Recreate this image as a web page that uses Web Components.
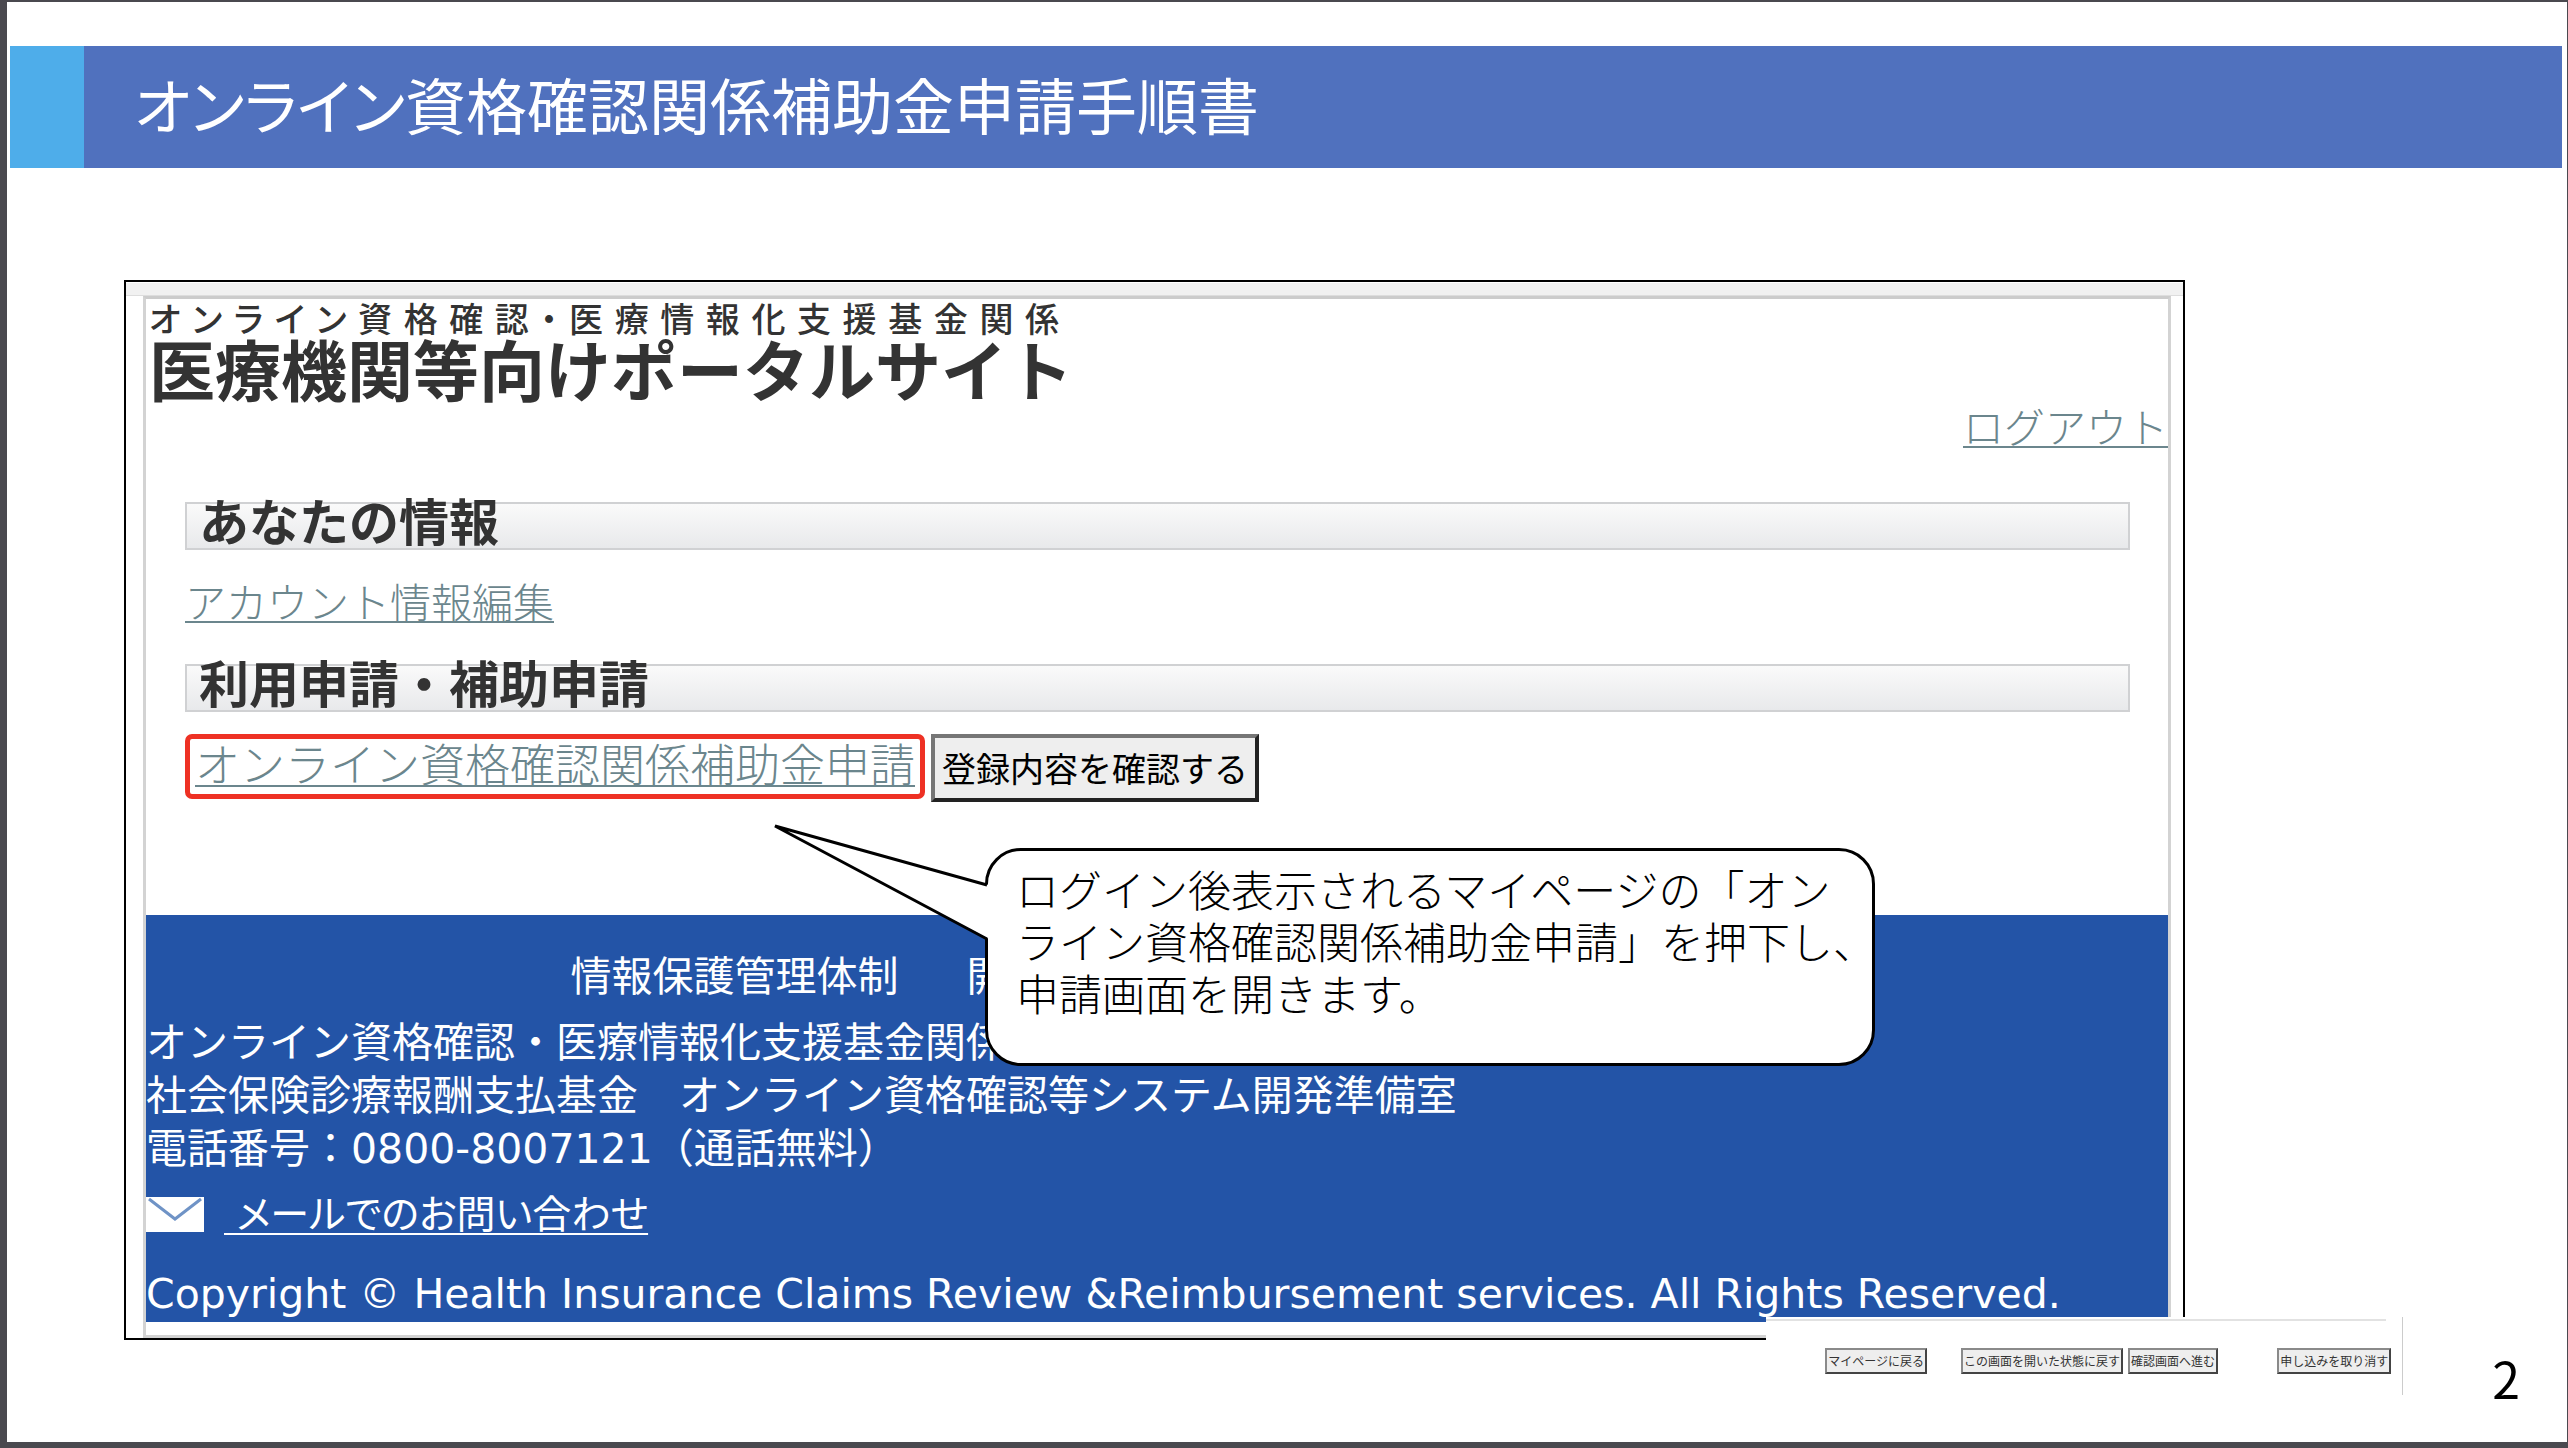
<!DOCTYPE html>
<html lang="ja">
<head>
<meta charset="utf-8">
<title>オンライン資格確認関係補助金申請手順書</title>
<style>
  html { background: #4a494f; }
  body {
    margin: 0;
    padding: 2px 1px 6px 7px;
    box-sizing: border-box;
    min-height: 100vh;
    display: flex;
    font-family: "Noto Sans CJK JP", "Noto Sans", sans-serif;
    color: #333;
  }
</style>
</head>
<body>
<manual-slide>
  <slide-title slot="title">オンライン資格確認関係補助金申請手順書</slide-title>
  <portal-window>
    <portal-logo slot="brand"><span slot="lead">オンライン資格確認・医療情報化支援基金関係</span>医療機関等向けポータルサイト</portal-logo>
    <portal-link slot="account" href="#logout">ログアウト</portal-link>
    <portal-section heading="あなたの情報">
      <portal-link href="#account">アカウント情報編集</portal-link>
    </portal-section>
    <portal-section heading="利用申請・補助申請" compact>
      <portal-link href="#apply" marked>オンライン資格確認関係補助金申請</portal-link>
      <portal-button>登録内容を確認する</portal-button>
    </portal-section>
    <portal-footer slot="footer"></portal-footer>
    <callout-note slot="note">ログイン後表示されるマイページの「オン<br>ライン資格確認関係補助金申請」を押下し、<br>申請画面を開きます。</callout-note>
  </portal-window>
  <form-actions slot="actions"></form-actions>
  <page-number slot="number">2</page-number>
</manual-slide>

<script>
const define = (name, html) => {
  const template = document.createElement("template");
  template.innerHTML = html;
  customElements.define(name, class extends HTMLElement {
    constructor() {
      super();
      this.attachShadow({ mode: "open" }).append(template.content.cloneNode(true));
    }
    connectedCallback() {
      const link = this.shadowRoot.querySelector("a[data-main]");
      if (link) link.href = this.getAttribute("href");
      const heading = this.shadowRoot.querySelector("[data-heading]");
      if (heading) heading.textContent = this.getAttribute("heading");
    }
  });
};

define("manual-slide", `
  <style>
    :host { flex: 1; display: flex; flex-direction: column; background: #fff; min-width: 0; }
    header { margin: 44px 5px 0 3px; }
    main { margin: 112px 382px 0 117px; }
    footer { display: flex; justify-content: flex-end; gap: 89px; margin-top: -23px; padding-right: 47px; position: relative; }
  </style>
  <header><slot name="title"></slot></header>
  <main><slot></slot></main>
  <footer><slot name="actions"></slot><slot name="number"></slot></footer>
`);

define("slide-title", `
  <style>
    :host { display: block; background: #5071be; border-left: 74px solid #4eadea; }
    h1 {
      margin: 0; padding: 0 50px 6px; font-size: 61px; font-weight: 400; line-height: 116px;
      color: #fff; font-feature-settings: "palt"; white-space: nowrap;
    }
  </style>
  <h1><slot></slot></h1>
`);

define("portal-window", `
  <style>
    :host { display: block; position: relative; border: 2px solid #000; background: #fff; }
    .strip { height: 12px; background: #f1f1f1; border-top: 1px solid #fff; border-bottom: 1px solid #ddd; }
    .page { margin: 0 12px 0 17px; border: 3px solid #d3d3d3; border-top-color: #ccc; padding-bottom: 13px; }
    .account { display: flex; justify-content: flex-end; }
    .sections { display: flex; flex-direction: column; gap: 36px; padding: 49px 38px 113px 39px; }
  </style>
  <div class="strip"></div>
  <div class="page">
    <slot name="brand"></slot>
    <div class="account"><slot name="account"></slot></div>
    <div class="sections"><slot></slot></div>
    <slot name="footer"></slot>
    <slot name="note"></slot>
  </div>
`);

define("portal-logo", `
  <style>
    :host {
      display: block; width: fit-content; padding: 0 0 8px 3px;
      font-size: 66px; font-weight: 700; line-height: 60px; white-space: nowrap;
    }
    .lead {
      contain: inline-size; padding-right: 14px; font-size: 34px; font-weight: 500; line-height: 38px;
      text-align: justify; text-align-last: justify; white-space: normal; font-feature-settings: "palt";
    }
  </style>
  <div class="lead"><slot name="lead"></slot></div>
  <slot></slot>
`);

define("portal-link", `
  <style>
    :host { display: block; }
    a {
      display: block; width: fit-content; padding-bottom: 8px; color: #6b868d;
      font-size: 41px; font-weight: 300; line-height: 40px;
      white-space: nowrap; text-decoration: underline 2px; text-underline-offset: 3px;
    }
    :host([marked]) a {
      padding: 0 5px 8px; border: 5px solid #ee3124; border-radius: 7px; font-size: 45px; line-height: 47px;
    }
  </style>
  <a data-main><slot></slot></a>
`);

define("portal-section", `
  <style>
    :host { display: block; }
    h2 {
      margin: 0; box-sizing: border-box; height: 48px; padding-left: 12px; border: 2px solid #d0d1d3;
      background: linear-gradient(#fafafa, #e8e9eb);
      font-size: 50px; font-weight: 700; line-height: 30px; white-space: nowrap;
    }
    .row { display: flex; align-items: flex-start; gap: 6px; margin-top: 30px; }
    :host([compact]) .row { margin-top: 22px; }
  </style>
  <h2 data-heading></h2>
  <div class="row"><slot></slot></div>
`);

define("portal-button", `
  <style>
    :host { display: block; }
    button {
      margin: 0; padding: 0 7px; font: 400 34px/60px "Noto Sans CJK JP", sans-serif; color: #000; background: #eee;
      border: 4px solid; border-color: #767676 #222 #222 #767676; white-space: nowrap;
    }
  </style>
  <button type="button"><slot></slot></button>
`);

define("portal-footer", `
  <style>
    :host {
      display: block; background: #2354a7; color: #fff; padding: 36px 0 1px;
      font: 400 41px/53px "DejaVu Sans", "Noto Sans CJK JP", sans-serif; white-space: nowrap;
    }
    nav { display: flex; gap: 68px; padding-left: 21%; margin-bottom: 13px; }
    p { margin: 0; }
    a { color: inherit; text-decoration: none; }
    .mail { display: flex; align-items: center; gap: 20px; margin: 12px 0 27px; }
    .mail a { font-size: 39px; text-decoration: underline 2px; text-underline-offset: 5px; font-feature-settings: "palt"; }
    svg { display: block; }
  </style>
  <nav><a href="#security">情報保護管理体制</a><a href="#disclosure">開</a></nav>
  <p>オンライン資格確認・医療情報化支援基金関係</p>
  <p>社会保険診療報酬支払基金　オンライン資格確認等システム開発準備室</p>
  <p>電話番号：0800-8007121（通話無料）</p>
  <div class="mail">
    <svg width="58" height="35" viewBox="0 0 58 35" aria-hidden="true">
      <rect width="58" height="35" fill="#fff"/>
      <path d="M3 2 29 22 55 2" fill="none" stroke="#6f93c6" stroke-width="3"/>
    </svg>
    <a href="#mail">&nbsp;メールでのお問い合わせ</a>
  </div>
  <p>Copyright © Health Insurance Claims Review &amp;Reimbursement services. All Rights Reserved.</p>
`);

define("callout-note", `
  <style>
    :host {
      position: absolute; left: 859px; top: 566px; width: 890px; height: 218px; box-sizing: border-box;
      padding: 11px 0 0 28px; border: 3px solid #000; border-radius: 36px; background: #fff; color: #000;
      font-size: 43px; font-weight: 300; line-height: 52px; white-space: nowrap;
    }
    svg { position: absolute; left: -217px; top: -31px; }
    p { margin: 0; }
  </style>
  <svg width="218" height="122" viewBox="0 0 218 122" aria-hidden="true">
    <path d="M218 65 4 6 218 119Z" fill="#fff"/>
    <path d="M216 65 4 6 216 119" fill="none" stroke="#000" stroke-width="3"/>
  </svg>
  <p><slot></slot></p>
`);

define("form-actions", `
  <style>
    :host {
      display: flex; box-sizing: border-box; width: 637px; height: 78px; padding: 31px 11px 0 59px;
      align-items: flex-start; background: linear-gradient(#e2e2e2, #e2e2e2) 0 2px / 620px 2px no-repeat #fff;
      border-right: 1px solid #ccc;
    }
    button {
      margin: 0; padding: 0 1px; font: 400 12px/22px "Noto Sans CJK JP", sans-serif; color: #333; background: #eee;
      border: 2px solid; border-color: #8a8a8a #444 #444 #8a8a8a; white-space: nowrap;
    }
    .edit { display: flex; gap: 5px; margin: 0 auto 0 34px; }
  </style>
  <button type="button">マイページに戻る</button>
  <div class="edit">
    <button type="button">この画面を開いた状態に戻す</button>
    <button type="button">確認画面へ進む</button>
  </div>
  <button type="button">申し込みを取り消す</button>
`);

define("page-number", `
  <style>
    :host { display: block; padding-top: 32px; font-size: 50px; font-weight: 400; line-height: 56px; color: #000; }
  </style>
  <slot></slot>
`);
</script>
</body>
</html>
